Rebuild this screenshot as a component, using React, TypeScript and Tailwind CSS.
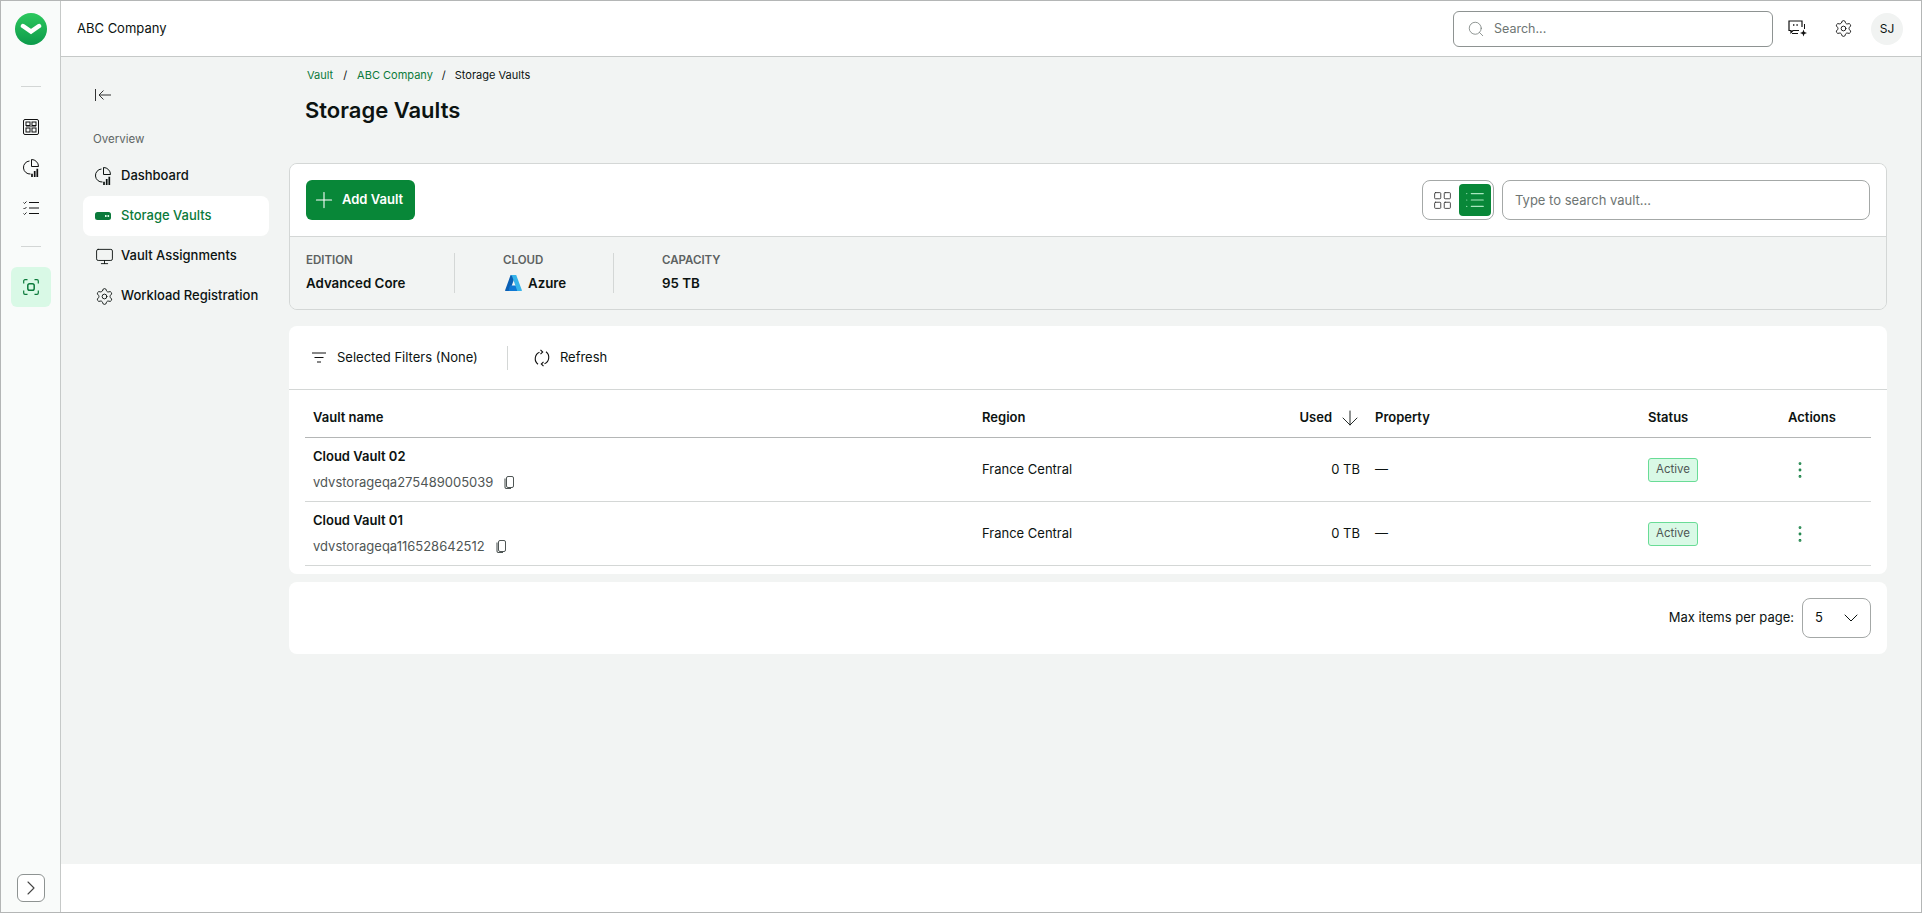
import { ChevronDown, ChevronRight, EllipsisVertical, List, Plus, Search, Settings, ArrowDown, Monitor, LayoutGrid } from 'lucide-react';

const navItems = [
  { label: 'Dashboard', icon: <PieBars /> },
  { label: 'Storage Vaults', icon: <VaultPill />, active: true },
  { label: 'Vault Assignments', icon: <Monitor size={19} strokeWidth={1.15} /> },
  { label: 'Workload Registration', icon: <Settings size={19} strokeWidth={1.15} /> },
];

const vaults = [
  { name: 'Cloud Vault 02', id: 'vdvstorageqa275489005039' },
  { name: 'Cloud Vault 01', id: 'vdvstorageqa116528642512' },
];

function PieBars() {
  return (
    <svg width="16" height="18" viewBox="0 0 16 18" fill="none" stroke="currentColor" strokeWidth="1">
      <path d="M6.500 2A6.500 6.500 0 1 0 7.500 15" />
      <path d="M8.500.5a7 7 0 0 1 7 7h-7z" />
      <path d="M9 18v-3.300M11.700 18v-6M14.300 18V9.700" strokeWidth="1.7" />
    </svg>
  );
}

function VaultPill() {
  return (
    <svg width="16" height="8" viewBox="0 0 16 8">
      <rect width="16" height="8" rx="2.5" fill="#0b7a3b" />
      <rect x="10" y="3" width="1.6" height="2" fill="#d9f9e6" />
      <rect x="12.5" y="3" width="1.6" height="2" fill="#d9f9e6" />
    </svg>
  );
}

function BoardIcon() {
  return (
    <svg width="16" height="16" viewBox="0 0 16 16" fill="none" stroke="#111" strokeWidth="1">
      <rect x="0.5" y="0.5" width="15" height="15" rx="1.5" />
      <rect x="3" y="3" width="4" height="3.5" />
      <rect x="9" y="3" width="4" height="3.5" />
      <rect x="3" y="9" width="4" height="4" />
      <rect x="9" y="9" width="4" height="4" />
      <path d="M3 7.6h10" stroke="#777" />
    </svg>
  );
}

function TasksIcon() {
  return (
    <svg width="16" height="14" viewBox="0 0 16 14" fill="none" stroke="#111" strokeWidth="1">
      <path d="M6 1.5h10M6 7h10M6 12.5h10" />
      <path d="M0.5 1.5l1 1 2-2M0.5 7l1 1 2-2M0.5 12.500l1 1 2-2" strokeWidth="0.9" />
    </svg>
  );
}

function ScanIcon() {
  return (
    <svg width="16" height="16" viewBox="0 0 16 16" fill="none" stroke="#0b7a3b" strokeWidth="1.2">
      <path d="M0.7 4.5V2A1.3 1.3 0 0 1 2 .7h2.5M11.5.7H14A1.3 1.3 0 0 1 15.3 2v2.5M15.3 11.5V14a1.3 1.3 0 0 1-1.3 1.3h-2.5M4.5 15.3H2A1.3 1.3 0 0 1 .7 14v-2.5" />
      <rect x="4.8" y="4.8" width="6.4" height="6.4" rx="1.8" strokeWidth="1.5" />
    </svg>
  );
}

function ChatSpark() {
  return (
    <svg width="19" height="17" viewBox="0 0 19 17" fill="none" stroke="#111" strokeWidth="1.2">
      <path d="M11 10.500H5l-2 2v-2H1V1h13v6" />
      <path d="M5 5h1.400M8.400 5h1.400" strokeWidth="1.4" />
      <path d="M4 13.500h6M16.500 4v5" strokeWidth="1" />
      <path d="M15.500 9.500l.9 2.600 2.600.9-2.600.9-.9 2.600-.9-2.600-2.600-.9 2.600-.9z" fill="#111" stroke="none" />
    </svg>
  );
}

function AzureLogo() {
  return (
    <svg width="17" height="16" viewBox="0 0 17 16">
      <path d="M5.6 0h5L5 15.4a.9.9 0 0 1-.8.6H.6a.6.6 0 0 1-.5-.8z" fill="#0a5fb4" />
      <path d="M12.800 10.600H5l-1.400 5.400h9.200z" fill="#0f78d4" />
      <path d="M5.6 0h5.600l5.700 15.200a.6.6 0 0 1-.5.8h-4.100L7 1z" fill="#37b4ea" />
    </svg>
  );
}

function BackArrow() {
  return (
    <svg width="16" height="12" viewBox="0 0 16 12" fill="none" stroke="#333" strokeWidth="1">
      <path d="M.5 0v12" />
      <path d="M16 6H4M8.500 1.500 4 6l4.500 4.500" />
    </svg>
  );
}

function FilterLines() {
  return (
    <svg width="14" height="11" viewBox="0 0 14 11" fill="none" stroke="#111" strokeWidth="1">
      <path d="M0 1h14M2.500 5.500h9M5 10h4" />
    </svg>
  );
}

function RefreshArrows() {
  return (
    <svg width="16" height="18" viewBox="0 0 16 18" fill="none" stroke="#111" strokeWidth="1.1">
      <path d="M5.500 3.200A7 7 0 0 0 4 15.200" />
      <path d="M10.500 14.800A7 7 0 0 0 12 2.800" />
      <path d="M6.500.8 8.700 3 6.500 5.200M9.500 12.800 7.300 15l2.200 2.200" />
    </svg>
  );
}

function CopyIcon() {
  return (
    <svg width="10" height="13" viewBox="0 0 10 13" fill="none" stroke="#4f5655">
      <rect x="2.500" y="0.500" width="7" height="11" rx="1.500" strokeWidth="1" />
      <path d="M1 2.500v8.500a1.500 1.500 0 0 0 1.500 1.500H7" strokeWidth="1.1" />
    </svg>
  );
}

function StatBlock({ label, children, className }: { label: string; children: React.ReactNode; className: string }) {
  return (
    <div className={className}>
      <div className="text-[11.5px] leading-[14px] font-semibold text-[#5c6160]">{label}</div>
      <div className="mt-[7px] text-[13.3px] leading-[18px] font-semibold text-[#0c1311]">{children}</div>
    </div>
  );
}

export default function App() {
  return (
    <div className="flex h-screen w-full border border-[#b4b6b6] bg-white font-['Inter',sans-serif] text-[13px] text-[#0c1311]">
      <aside className="flex w-[60px] shrink-0 flex-col items-center border-r border-[#c6c9c8] bg-[#f9fbfa]">
        <div className="mt-[12px] flex h-[32px] w-[32px] items-center justify-center rounded-full bg-gradient-to-b from-[#2cc95e] to-[#0a9a4a]">
          <svg width="22" height="12" viewBox="0 0 22 12" fill="none" stroke="white" strokeWidth="4.5" strokeLinecap="round">
            <path d="M3 3 11 8.500 19 3" />
          </svg>
        </div>
        <div className="mt-[41px] h-px w-[20px] bg-[#d3d6d5]" />
        <div className="mt-[32px] flex h-[16px] items-center"><BoardIcon /></div>
        <div className="mt-[24px] flex h-[18px] items-center text-[#111]"><PieBars /></div>
        <div className="mt-[24px] flex h-[14px] items-center"><TasksIcon /></div>
        <div className="mt-[31px] h-px w-[20px] bg-[#d3d6d5]" />
        <div className="mt-[20px] flex h-[40px] w-[40px] items-center justify-center rounded-[6px] bg-[#d9f9e6]"><ScanIcon /></div>
        <button className="mt-auto mb-[10px] flex h-[28px] w-[28px] items-center justify-center rounded-[6px] border border-[#8e9392] bg-white text-[#444]">
          <ChevronRight size={24} strokeWidth={1.1} />
        </button>
      </aside>

      <div className="flex min-w-0 flex-1 flex-col">
        <header className="flex h-[56px] shrink-0 items-center border-b border-[#c6c9c8] pr-[18px] pl-[16px]">
          <span className="pt-px">ABC Company</span>
          <div className="ml-auto flex h-[36px] w-[320px] items-center rounded-[6px] border border-[#8e9392] pl-[13px] text-[12.5px] text-[#6e7573]">
            <Search size={18} strokeWidth={1} />
            <span className="ml-[9px] pt-px">Search...</span>
          </div>
          <div className="ml-[15px] flex w-[19px] justify-center"><ChatSpark /></div>
          <Settings size={19} strokeWidth={1.15} className="ml-[27px] text-[#111]" />
          <div className="ml-[18px] flex h-[32px] w-[32px] items-center justify-center rounded-full bg-[#f1f3f2] text-[12px]">SJ</div>
        </header>

        <div className="flex min-h-0 flex-1 bg-[#f2f4f3]">
          <nav className="w-[228px] shrink-0 pt-[32px] pl-[22px]">
            <div className="ml-[12px]"><BackArrow /></div>
            <div className="mt-[30px] pl-[10px] text-[11.5px] leading-[16px] text-[#5f6665]">Overview</div>
            <ul className="mt-[9px] w-[186px]">
              {navItems.map((item) => (
                <li
                  key={item.label}
                  className={item.active ? 'flex h-[40px] items-center rounded-[8px] bg-white pl-[12px] text-[#0b7a3b]' : 'flex h-[40px] items-center pl-[12px]'}
                >
                  <span className="flex w-[26px] shrink-0">{item.icon}</span>
                  <span className="whitespace-nowrap font-[450]">{item.label}</span>
                </li>
              ))}
            </ul>
          </nav>

          <main className="min-w-0 flex-1 pr-[34px]">
            <div className="flex h-[26px] items-end pl-[18px] text-[11px] leading-[16px]">
              <span className="text-[#0b7a3b]">Vault</span>
              <span className="mx-[10px]">/</span>
              <span className="text-[#0b7a3b]">ABC Company</span>
              <span className="mx-[9px]">/</span>
              <span>Storage Vaults</span>
            </div>
            <h1 className="mt-[13px] pl-[16px] text-[22px] leading-[28px] font-semibold">Storage Vaults</h1>

            <section className="mt-[39px] overflow-hidden rounded-[8px] border border-[#d4d7d6]">
              <div className="flex h-[73px] items-center border-b border-[#d4d7d6] bg-white pr-[16px] pl-[16px]">
                <button className="flex h-[40px] w-[109px] items-center rounded-[6px] bg-[#088738] pl-[5px] font-semibold text-white">
                  <Plus size={26} strokeWidth={1} />
                  <span className="ml-[5px]">Add Vault</span>
                </button>
                <div className="ml-auto flex h-[40px] w-[72px] items-center rounded-[8px] border border-[#a4a8a7] pl-[3px]">
                  <span className="flex h-[32px] w-[33px] items-center justify-center text-[#333]"><LayoutGrid size={21} strokeWidth={1} /></span>
                  <span className="flex h-[32px] w-[32px] items-center justify-center rounded-[4px] bg-[#088738] text-[#a9e7bf]"><List size={22} strokeWidth={1.3} /></span>
                </div>
                <div className="ml-[8px] flex h-[40px] w-[368px] items-center rounded-[8px] border border-[#a4a8a7] pt-px pl-[12px] text-[#6e7573]">Type to search vault...</div>
              </div>
              <div className="flex h-[72px] items-center bg-[#f2f4f3] pl-[16px]">
                <StatBlock label="EDITION" className="h-[40px] w-[149px] border-r border-[#d4d7d6]">Advanced Core</StatBlock>
                <StatBlock label="CLOUD" className="h-[40px] w-[159px] border-r border-[#d4d7d6] pl-[48px]">
                  <span className="flex items-center gap-[6px] pl-[2px]"><AzureLogo />Azure</span>
                </StatBlock>
                <StatBlock label="CAPACITY" className="h-[40px] pl-[48px]">95 TB</StatBlock>
              </div>
            </section>

            <section className="mt-[16px] rounded-[8px] bg-white pb-[8px]">
              <div className="flex h-[64px] items-center border-b border-[#d4d7d6] pl-[23px]">
                <FilterLines />
                <span className="ml-[11px] pt-px">Selected Filters (None)</span>
                <div className="ml-[29px] h-[24px] w-px bg-[#d4d7d6]" />
                <span className="ml-[26px]"><RefreshArrows /></span>
                <span className="ml-[10px] pt-px">Refresh</span>
              </div>
              <table className="ml-[16px] w-[1566px] table-fixed border-collapse">
                <thead>
                  <tr className="h-[47px] border-b border-[#b4b6b6] text-left font-semibold">
                    <th className="w-[669px] pt-[9px] pl-[8px] font-semibold">Vault name</th>
                    <th className="w-[235px] pt-[9px] pl-[8px] font-semibold">Region</th>
                    <th className="w-[166px] pt-[9px] pr-[13px] text-right font-semibold">
                      <span className="inline-flex items-center">Used<ArrowDown size={24} strokeWidth={0.9} className="ml-[6px]" /></span>
                    </th>
                    <th className="w-[273px] pt-[9px] font-semibold">Property</th>
                    <th className="w-[140px] pt-[9px] font-semibold">Status</th>
                    <th className="pt-[9px] font-semibold">Actions</th>
                  </tr>
                </thead>
                <tbody>
                  {vaults.map((vault) => (
                    <tr key={vault.id} className="h-[64px] border-b border-[#d4d7d6]">
                      <td className="pl-[8px]">
                        <div className="leading-[18px] font-semibold">{vault.name}</div>
                        <div className="mt-[8px] flex items-center leading-[18px] text-[#4f5655]">
                          {vault.id}
                          <span className="ml-[11px]"><CopyIcon /></span>
                        </div>
                      </td>
                      <td className="pt-[2px] pl-[8px]">France Central</td>
                      <td className="pt-[2px] pr-[15px] text-right">0 TB</td>
                      <td className="pt-[2px]">—</td>
                      <td className="pt-[2px]">
                        <span className="flex h-[24px] w-[50px] items-center justify-center rounded-[3px] border border-[#69dc96] bg-[#d9f9e6] text-[11.5px] text-[#4f5655]">Active</span>
                      </td>
                      <td className="pt-[2px] pl-[1px] text-[#0b7a3b]"><EllipsisVertical size={22} strokeWidth={1.1} /></td>
                    </tr>
                  ))}
                </tbody>
              </table>
            </section>

            <section className="mt-[8px] flex h-[72px] items-center justify-end rounded-[8px] bg-white pr-[16px]">
              <span>Max items per page:</span>
              <div className="ml-[8px] flex h-[40px] w-[69px] items-center justify-between rounded-[8px] border border-[#a4a8a7] pr-[7px] pl-[12px]">
                5
                <ChevronDown size={24} strokeWidth={1} />
              </div>
            </section>
          </main>
        </div>
        <div className="h-[48px] shrink-0 bg-white" />
      </div>
    </div>
  );
}
